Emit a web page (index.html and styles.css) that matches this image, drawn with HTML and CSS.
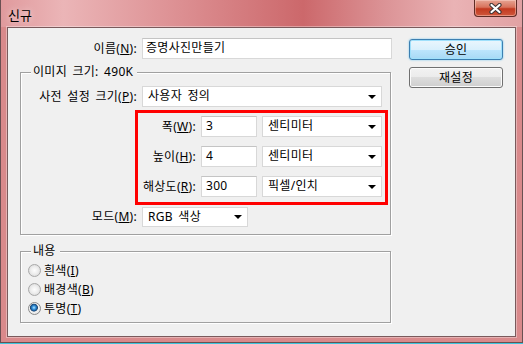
FILE: index.html
```html
<!DOCTYPE html>
<html lang="ko">
	<head>
		<meta charset="UTF-8" />
		<meta name="viewport" content="width=device-width, initial-scale=1.0" />
		<title>신규</title>
		<link rel="stylesheet" href="styles.css">
	</head>
	<body>
		<div class="window">
			<div class="titlebar">
				<span class="title">신규</span>
				<button type="button" class="close-button">
					<svg width="15" height="11" viewBox="0 0 15 11">
						<path d="M3.5 2 L11.5 9 M11.5 2 L3.5 9" stroke="#3c3434" stroke-width="4.2" stroke-linecap="round" fill="none" />
						<path d="M3.5 2 L11.5 9 M11.5 2 L3.5 9" stroke="#ffffff" stroke-width="2.2" stroke-linecap="round" fill="none" />
					</svg>
				</button>
			</div>

			<div class="client">
				<div class="main">
					<div class="name-row">
						<label class="field-label">이름(<u>N</u>):</label>
						<div class="textbox">증명사진만들기</div>
					</div>

					<div class="group size-group">
						<span class="group-title">이미지 크기: 490K</span>

						<div class="preset-row">
							<label class="field-label">사전 설정 크기(<u>P</u>):</label>
							<div class="dropdown">사용자 정의<span class="arrow"></span></div>
						</div>

						<!-- highlighted box round the size fields -->
						<div class="highlight">
							<label class="field-label">폭(<u>W</u>):</label>
							<div class="textbox small">3</div>
							<div class="dropdown">센티미터<span class="arrow"></span></div>

							<label class="field-label">높이(<u>H</u>):</label>
							<div class="textbox small">4</div>
							<div class="dropdown">센티미터<span class="arrow"></span></div>

							<label class="field-label">해상도(<u>R</u>):</label>
							<div class="textbox small">300</div>
							<div class="dropdown">픽셀/인치<span class="arrow"></span></div>
						</div>

						<div class="mode-row">
							<label class="field-label">모드(<u>M</u>):</label>
							<div class="dropdown">RGB 색상<span class="arrow"></span></div>
						</div>
					</div>

					<div class="group content-group">
						<span class="group-title">내용</span>
						<div class="radio-row">
							<span class="radio"></span>흰색(<u>I</u>)
						</div>
						<div class="radio-row">
							<span class="radio"></span>배경색(<u>B</u>)
						</div>
						<div class="radio-row">
							<span class="radio checked"></span>투명(<u>T</u>)
						</div>
					</div>
				</div>

				<div class="side">
					<button type="button" class="dialog-button default-button">승인</button>
					<button type="button" class="dialog-button">재설정</button>
				</div>
			</div>
		</div>
	</body>
</html>
```

FILE: styles.css
```css
/* General styling */
body {
	margin: 0;
	background-color: #3cc4dc;
	font-family: "Noto Sans", "Noto Sans CJK KR", sans-serif;
	font-size: 12px;
	letter-spacing: 0.3px;
	word-spacing: 2px;
	color: #000;
}

/* Window frame */
.window {
	width: 523px;
	height: 343px;
	box-sizing: border-box;
	border: 1px solid #6a5052;
	border-top: none;
	padding: 0 6px 5px;
	background-color: #d9898b;
	display: flex;
	flex-direction: column;
}

.titlebar {
	height: 27px;
	flex-shrink: 0;
	margin: 0 -6px;
	padding: 0 5px 0 7px;
	display: flex;
	justify-content: space-between;
	align-items: flex-start;
	background: linear-gradient(
		to right,
		#e09a9d 0%,
		#ebb5b7 12%,
		#de9396 32%,
		#cc686b 58%,
		#dc9497 74%,
		#eab3b5 87%,
		#e1a1a3 100%
	);
}

.title {
	margin-top: 7px;
	line-height: 16px;
	font-size: 13px;
	letter-spacing: 0;
	text-shadow: 0 0 6px rgba(255, 255, 255, 0.8);
}

.close-button {
	width: 43px;
	height: 17px;
	padding: 0;
	border: 1px solid #5e2b25;
	border-top: none;
	border-radius: 0 0 4px 4px;
	background: linear-gradient(#e6a493 0%, #d8735c 45%, #c2391f 55%, #d0583c 100%);
	box-shadow: inset 0 0 0 1px rgba(255, 220, 210, 0.45);
	display: flex;
	justify-content: center;
	align-items: center;
}

/* Client area */
.client {
	flex: 1;
	display: flex;
	padding: 10px 0 0 12px;
	background-color: #f0f0f0;
	border: 1px solid #7a5a5c;
	box-shadow: 0 0 0 1px rgba(255, 255, 255, 0.35);
}

.main {
	width: 372px;
	display: flex;
	flex-direction: column;
}

.field-label {
	text-align: right;
	white-space: nowrap;
	line-height: 16px;
}

.name-row,
.preset-row,
.mode-row {
	display: grid;
	column-gap: 5px;
	align-items: center;
}
.name-row {
	grid-template-columns: 117px 250px;
}
.preset-row {
	grid-template-columns: 116px 240px;
}
.mode-row {
	grid-template-columns: 116px 106px;
	margin-top: 2px;
}

/* Text boxes and drop-downs */
.textbox,
.dropdown {
	height: 21px;
	box-sizing: border-box;
	background-color: #fff;
	border: 1px solid #d8d8d8;
	line-height: 18px;
	white-space: nowrap;
}
.textbox {
	border-top-color: #c4c4c4;
	padding-left: 3px;
}
.textbox.small {
	padding-left: 4px;
	line-height: 17px;
}
.dropdown {
	position: relative;
	padding-left: 5px;
}
.mode-row .dropdown {
	height: 20px;
	line-height: 17px;
}
.arrow {
	position: absolute;
	right: 5px;
	top: 50%;
	margin-top: -2px;
	border-left: 4px solid transparent;
	border-right: 4px solid transparent;
	border-top: 4px solid #000;
}

/* Group boxes */
.group {
	position: relative;
	width: 371px;
	box-sizing: border-box;
	border: 1px solid #a0a0a0;
	box-shadow: 1px 1px 0 #fff, inset 1px 1px 0 #fff;
}
.group-title {
	position: absolute;
	top: -8px;
	left: 10px;
	padding: 0 4px 0 2px;
	line-height: 14px;
	background-color: #f0f0f0;
}
.size-group {
	margin-top: 13px;
	padding: 13px 0 7px;
}
.content-group {
	margin-top: 16px;
	padding: 9px 0 4px;
}

/* Red highlight round the size fields */
.highlight {
	width: 253px;
	box-sizing: border-box;
	margin: 3px 0 0 114px;
	padding: 3px 0 5px;
	border: 3px solid #ff0000;
	display: grid;
	grid-template-columns: 58px 56px 120px;
	grid-auto-rows: 21px;
	column-gap: 5px;
	row-gap: 9px;
	align-items: center;
}

/* Radio buttons */
.radio-row {
	height: 19px;
	display: flex;
	align-items: center;
	padding-left: 7px;
	line-height: 16px;
}
.radio {
	width: 13px;
	height: 13px;
	box-sizing: border-box;
	margin-right: 3px;
	border-radius: 50%;
	border: 1px solid #a8a8a8;
	background: radial-gradient(circle, #fdfdfd 0%, #eeeeee 45%, #d2d2d2 100%);
}
.radio.checked {
	border-color: #8a8a8a;
	background: radial-gradient(
		circle at 45% 42%,
		#b5e6ff 0,
		#3d9be2 1.6px,
		#175c9e 3px,
		#23486e 3.6px,
		#f4f4f4 4.3px,
		#d6d6d6 100%
	);
}

/* Button styling */
.side {
	margin: 1px 0 0 17px;
	display: flex;
	flex-direction: column;
	gap: 7px;
}
.dialog-button {
	width: 94px;
	height: 21px;
	padding: 0;
	font-family: inherit;
	font-size: 12px;
	letter-spacing: 0.3px;
	color: #000;
	border: 1px solid #707070;
	border-radius: 3px;
	background: linear-gradient(#f2f2f2 0%, #ebebeb 50%, #dddddd 50%, #cfcfcf 100%);
	box-shadow: inset 0 0 0 1px #fbfbfb;
	line-height: 17px;
}
.default-button {
	border-color: #3c7fb1;
	background: linear-gradient(#eaf6fd 0%, #d9f0fc 50%, #bee6fd 50%, #a7d9f5 100%);
	box-shadow: inset 0 0 0 1px #9fe0fb, 0 0 2px #66c3ef;
}
```
